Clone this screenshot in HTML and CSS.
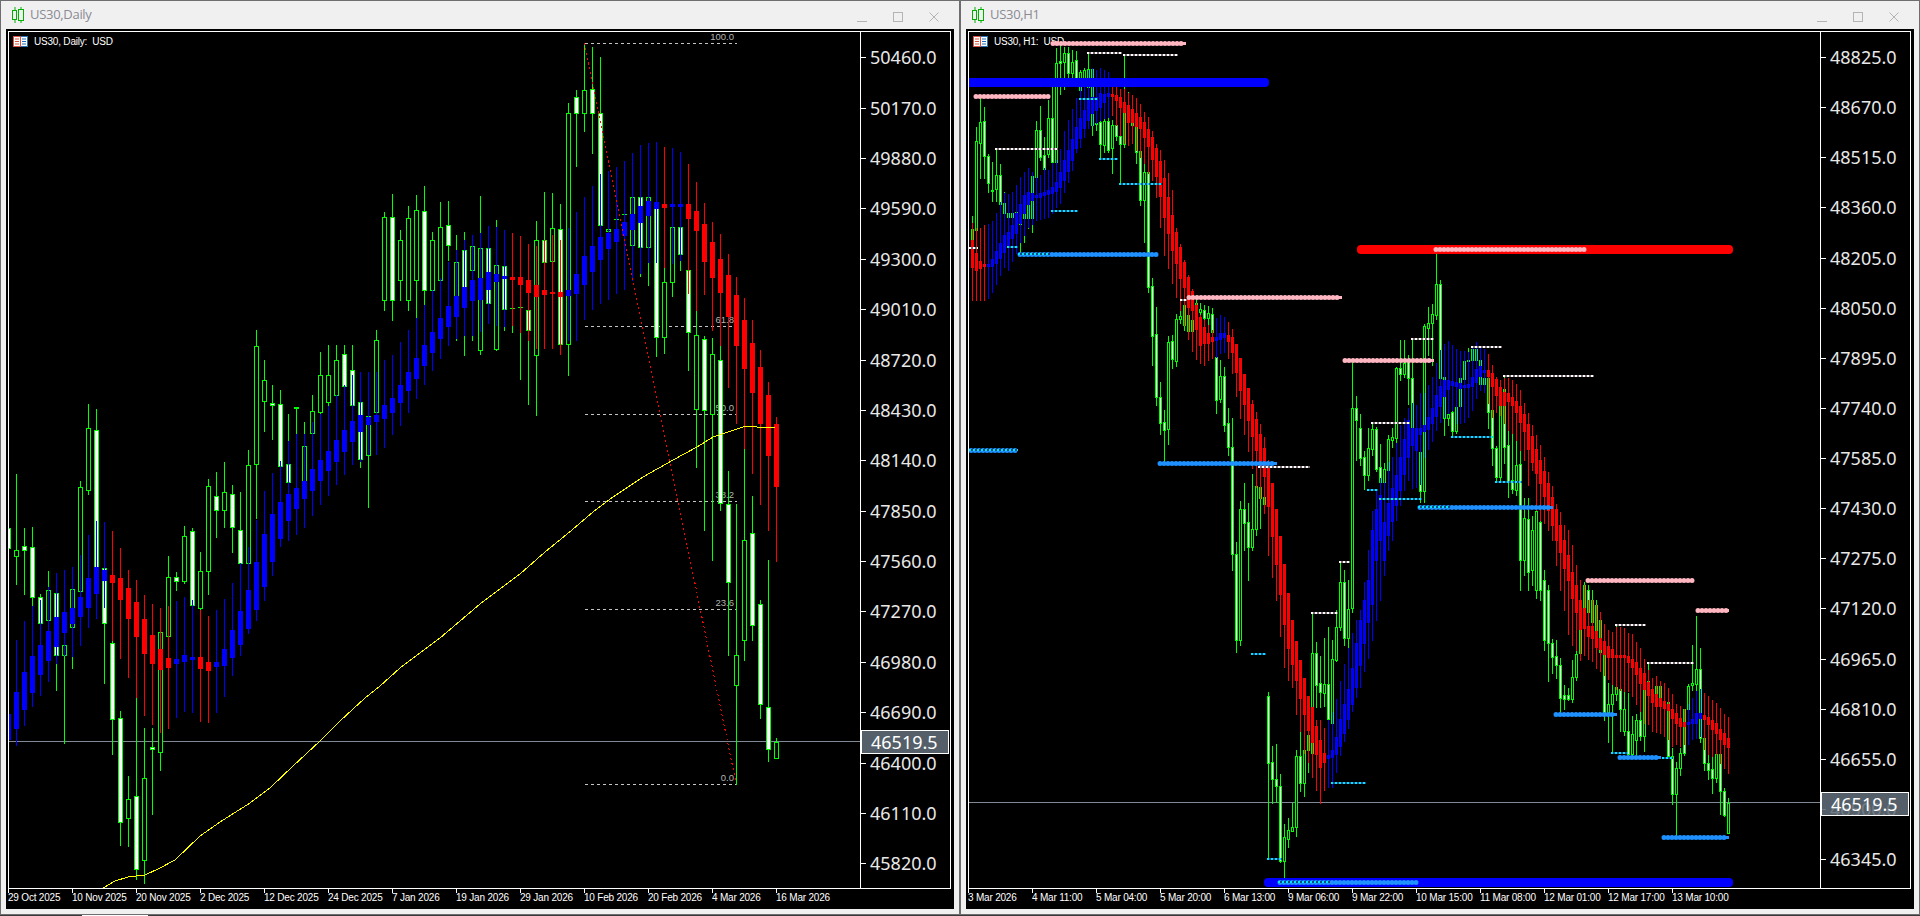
FILE: index.html
```html
<!DOCTYPE html>
<html lang="en">
<head>
<meta charset="utf-8">
<title>US30 charts</title>
<link rel="stylesheet" href="styles.css">
</head>
<body>
<main class="desktop">
  <section class="window">
    <header class="titlebar">
      <svg class="app-icon" viewBox="0 0 12 16"><path d="M3 0v3M3 13v3M9 0v3M9 13v3" stroke="#00b000" fill="none"/><rect x=".5" y="3.5" width="4" height="9" fill="none" stroke="#00b000"/><rect x="6.5" y="2.5" width="5" height="11" fill="none" stroke="#00b000"/></svg>
      <span class="title">US30,Daily</span>
      <div class="controls">
        <svg viewBox="0 0 10 10"><path d="M0 9.5h10" stroke="#b4b4b4"/></svg>
        <svg viewBox="0 0 10 10"><rect x=".5" y=".5" width="9" height="9" fill="none" stroke="#b4b4b4"/></svg>
        <svg viewBox="0 0 10 10"><path d="M.5.5l9 9M9.5.5l-9 9" stroke="#b4b4b4" fill="none"/></svg>
      </div>
    </header>
    <div class="frame">
      <div class="chart">
        <div class="plot">
          <div class="legend">
            <svg class="legend-icon" viewBox="0 0 15 11"><rect x=".5" y=".5" width="14" height="10" fill="#fff" stroke="#2a6fb0"/><path d="M.5.5H7.5V10.5H.5Z" fill="none" stroke="#e0503f"/><path d="M2 3h4M2 5.5h4M2 8h4" stroke="#e0503f"/><path d="M9 3h4M9 5.5h4M9 8h4" stroke="#1c6cb4"/></svg>
            <span>US30, Daily:&nbsp; USD</span>
          </div>
          <svg class="canvas" id="daily" viewBox="9 32 851 856"></svg>
        </div>
        <div class="price-axis daily-scale">
          <span class="tick">50460.0</span><span class="tick">50170.0</span><span class="tick">49880.0</span><span class="tick">49590.0</span><span class="tick">49300.0</span><span class="tick">49010.0</span><span class="tick">48720.0</span><span class="tick">48430.0</span><span class="tick">48140.0</span><span class="tick">47850.0</span><span class="tick">47560.0</span><span class="tick">47270.0</span><span class="tick">46980.0</span><span class="tick">46690.0</span><span class="tick">46400.0</span><span class="tick">46110.0</span><span class="tick">45820.0</span>
          <span class="price-tag">46519.5</span>
        </div>
      </div>
      <div class="time-axis">
        <span>29 Oct 2025</span><span>10 Nov 2025</span><span>20 Nov 2025</span><span>2 Dec 2025</span><span>12 Dec 2025</span><span>24 Dec 2025</span><span>7 Jan 2026</span><span>19 Jan 2026</span><span>29 Jan 2026</span><span>10 Feb 2026</span><span>20 Feb 2026</span><span>4 Mar 2026</span><span>16 Mar 2026</span>
      </div>
    </div>
  </section>

  <section class="window">
    <header class="titlebar">
      <svg class="app-icon" viewBox="0 0 12 16"><path d="M3 0v3M3 13v3M9 0v3M9 13v3" stroke="#00b000" fill="none"/><rect x=".5" y="3.5" width="4" height="9" fill="none" stroke="#00b000"/><rect x="6.5" y="2.5" width="5" height="11" fill="none" stroke="#00b000"/></svg>
      <span class="title">US30,H1</span>
      <div class="controls">
        <svg viewBox="0 0 10 10"><path d="M0 9.5h10" stroke="#b4b4b4"/></svg>
        <svg viewBox="0 0 10 10"><rect x=".5" y=".5" width="9" height="9" fill="none" stroke="#b4b4b4"/></svg>
        <svg viewBox="0 0 10 10"><path d="M.5.5l9 9M9.5.5l-9 9" stroke="#b4b4b4" fill="none"/></svg>
      </div>
    </header>
    <div class="frame">
      <div class="chart">
        <div class="plot">
          <div class="legend">
            <svg class="legend-icon" viewBox="0 0 15 11"><rect x=".5" y=".5" width="14" height="10" fill="#fff" stroke="#2a6fb0"/><path d="M.5.5H7.5V10.5H.5Z" fill="none" stroke="#e0503f"/><path d="M2 3h4M2 5.5h4M2 8h4" stroke="#e0503f"/><path d="M9 3h4M9 5.5h4M9 8h4" stroke="#1c6cb4"/></svg>
            <span>US30, H1:&nbsp; USD</span>
          </div>
          <svg class="canvas" id="hourly" viewBox="969 32 851 856"></svg>
        </div>
        <div class="price-axis hourly-scale">
          <span class="tick">48825.0</span><span class="tick">48670.0</span><span class="tick">48515.0</span><span class="tick">48360.0</span><span class="tick">48205.0</span><span class="tick">48050.0</span><span class="tick">47895.0</span><span class="tick">47740.0</span><span class="tick">47585.0</span><span class="tick">47430.0</span><span class="tick">47275.0</span><span class="tick">47120.0</span><span class="tick">46965.0</span><span class="tick">46810.0</span><span class="tick">46655.0</span><span class="tick">46500.0</span><span class="tick">46345.0</span>
          <span class="price-tag">46519.5</span>
        </div>
      </div>
      <div class="time-axis">
        <span>3 Mar 2026</span><span>4 Mar 11:00</span><span>5 Mar 04:00</span><span>5 Mar 20:00</span><span>6 Mar 13:00</span><span>9 Mar 06:00</span><span>9 Mar 22:00</span><span>10 Mar 15:00</span><span>11 Mar 08:00</span><span>12 Mar 01:00</span><span>12 Mar 17:00</span><span>13 Mar 10:00</span>
      </div>
    </div>
  </section>
</main>
<div class="taskstrip"><span class="task"></span></div>
<script src="chart.js"></script>
</body>
</html>
```
FILE: styles.css
```css
* { box-sizing: border-box; }
html, body { margin: 0; height: 100%; overflow: hidden; background: #3a3a3a; }
body { display: flex; flex-direction: column; font-family: "Liberation Sans", Arial, sans-serif; }

.desktop { display: grid; grid-template-columns: 960px 960px; height: 915px; }
.taskstrip { height: 1px; background: #3a3a3a; }
.task { display: block; width: 66px; height: 1px; margin-left: 82px; background: #fff; }

.window { display: flex; flex-direction: column; border: 1px solid #6e6e6e; background: #f0f0f0; }

.titlebar { flex: none; display: flex; align-items: center; height: 28px; padding: 0 20px 0 11px; }
.app-icon { width: 12px; height: 16px; margin-right: 6px; }
.title { margin-top: -2px; font-family: "Open Sans", sans-serif; font-size: 13px; letter-spacing: -0.3px; color: #8a8a94; }
.controls { display: flex; gap: 26px; margin-left: auto; margin-top: 4px; }
.controls svg { width: 10px; height: 10px; display: block; }

.frame { flex: none; height: 880px; margin: 0 5px; padding: 2px 3px 0 2px; background: #000; }

.chart { display: flex; height: 858px; border: 1px solid #fff; }
.plot { position: relative; flex: none; width: 851px; height: 856px; }
.canvas { position: relative; display: block; width: 851px; height: 856px; shape-rendering: crispEdges; }
.canvas text { font-family: "Liberation Sans", sans-serif; font-size: 9.5px; fill: #b4b4b4; text-anchor: end; shape-rendering: auto; }

.legend { position: absolute; left: 4px; top: 4px; display: flex; align-items: center; gap: 6px; color: #fff; font-size: 10px; letter-spacing: -0.2px; }
.legend-icon { width: 15px; height: 11px; display: block; }

.price-axis { position: relative; flex: none; width: 90px; display: flex; flex-direction: column; border-left: 1px solid #fff; }
.tick { position: relative; flex: none; display: flex; align-items: center; padding-left: 9px; color: #e8e8e8; font-family: "Noto Sans", sans-serif; font-size: 18px; }
.tick::before { content: ""; position: absolute; left: 0; top: 50%; width: 5px; height: 1px; background: #fff; }
.daily-scale .tick { height: 50.4px; }
.hourly-scale .tick { height: 50.125px; }

.price-tag { position: absolute; left: 0; width: 88px; height: 24px; display: flex; align-items: center; padding-left: 9px; border: 1px solid #fff; background: rgba(96, 108, 120, .88); color: #fff; font-family: "Noto Sans", sans-serif; font-size: 18px; }
.daily-scale .price-tag { top: 698px; }
.hourly-scale .price-tag { top: 760px; }

.time-axis { display: flex; height: 20px; }
.time-axis span { position: relative; flex: none; width: 64px; padding-top: 3px; color: #fff; font-size: 10px; letter-spacing: -0.2px; line-height: 12px; white-space: nowrap; }
.time-axis span::before { content: ""; position: absolute; left: 0; top: 0; width: 1px; height: 4px; background: #fff; }
```
FILE: chart.js
```js
var NS = "http://www.w3.org/2000/svg";
function el(parent, tag, attrs, text) {
  var n = document.createElementNS(NS, tag);
  for (var k in attrs) n.setAttribute(k, attrs[k]);
  if (text) n.textContent = text;
  parent.appendChild(n);
  return n;
}
function rect(p, x, y, w, h, fill) { if (h > 0) el(p, "rect", { x: x, y: y, width: w, height: h, fill: fill }); }

var GREEN = "#00ff00", BLUE = "#0000ff", RED = "#ff0000";

function candle(p, cx, half, c) {
  rect(p, cx, c[2], 1, c[3] - c[2] + 1, GREEN);
  var w = half * 2 + 1;
  rect(p, cx - half, c[0], w, c[1] - c[0] + 1, GREEN);
  rect(p, cx - half + 1, c[0] + 1, w - 2, c[1] - c[0] - 1, c[4] ? "#fff" : "#000");
}
function smooth(p, cx, half, c, color) {
  rect(p, cx, c[2], 1, c[3] - c[2] + 1, color);
  rect(p, cx - half, c[0], half * 2 + 1, c[1] - c[0] + 1, color);
}
function inRanges(i, ranges) {
  return ranges.some(function (r) { return i >= r[0] && i <= r[1]; });
}

/* ---------- Daily: bars k = -1..95, x = 16 + 8k ---------- */
var dailyBars = [
[528,548,520,560,1],[550,556,474,584,0],[546,550,528,594,1],[547,597,527,606,1],[597,623,594,640,1],[590,620,571,640,0],[593,655,585,690,1],[645,655,610,743,0],[589,627,580,668,0],[487,591,481,595,0],
[428,490,404,494,0],[430,567,409,570,1],[568,623,563,683,1],[643,719,638,754,1],[718,822,711,845,1],[799,818,776,846,0],[796,869,697,879,1],[778,860,728,883,0],[747,749,728,814,1],[632,752,625,770,0],
[577,636,556,640,0],[577,581,572,590,1],[536,581,526,583,0],[531,605,528,610,1],[571,608,552,611,0],[486,571,479,594,0],[496,510,472,537,1],[492,510,462,527,0],[494,527,485,552,1],[530,563,492,570,1],
[465,563,450,570,0],[346,464,330,518,0],[380,401,360,431,0],[403,405,385,439,1],[404,466,390,472,1],[464,482,414,500,1],[407,408,407,441,0],[446,481,422,492,0],[411,433,395,490,0],[375,412,352,440,0],
[375,402,345,420,0],[360,395,345,420,0],[354,386,345,410,1],[370,405,345,415,1],[402,459,390,467,1],[416,455,400,507,0],[340,412,330,425,0],[217,300,212,310,0],[217,300,194,320,1],[240,280,230,300,0],
[218,300,206,310,0],[210,280,195,320,0],[211,290,186,340,1],[240,290,232,325,0],[227,280,202,345,0],[225,245,201,260,1],[262,300,235,340,0],[250,290,232,355,1],[246,270,236,340,0],[248,350,196,354,0],
[248,303,235,312,1],[265,349,220,350,0],[266,309,240,330,1],[308,308,286,332,0],[307,307,290,379,0],[310,330,306,404,1],[240,355,221,415,0],[240,262,192,270,1],[228,261,193,270,0],[229,344,204,348,1],
[113,344,103,375,0],[97,113,90,166,1],[90,113,43,131,0],[89,113,47,153,1],[113,225,57,228,1],[229,231,226,250,0],[219,219,215,230,0],[214,214,210,225,0],[197,245,195,276,0],[197,247,195,276,1],
[197,247,197,285,0],[203,337,200,356,1],[282,337,267,353,0],[227,282,225,296,0],[227,254,225,270,1],[270,332,260,370,1],[335,409,301,467,0],[339,410,336,530,1],[354,414,338,560,0],[360,503,340,510,1],
[504,582,471,655,1],[655,685,504,784,0],[540,640,448,660,0],[533,625,496,640,1],[604,704,600,718,1],[707,749,560,761,1],[742,758,738,758,0]
];
var dailySmooth = [
[714,739,714,739],[692,728,640,745],[672,709,621,725],[656,692,606,706],[645,674,600,695],[631,660,587,681],[617,646,573,663],[612,632,570,655],[608,623,567,656],[597,616,555,645],
[578,607,535,627],[567,593,521,618],[570,580,522,607],[575,582,531,640],[578,599,548,658],[588,618,570,677],[602,636,580,697],[619,653,595,715],[635,663,604,724],[649,669,608,732],
[658,667,606,728],[659,663,601,717],[655,661,597,711],[657,659,600,712],[657,668,610,721],[662,670,616,722],[662,666,610,712],[649,665,599,696],[630,657,583,675],[611,644,563,655],
[590,628,547,633],[562,609,520,620],[534,586,491,600],[514,561,473,575],[502,538,461,546],[494,520,441,540],[488,508,434,534],[481,498,434,527],[469,490,422,515],[460,480,414,504],
[451,470,406,495],[440,461,395,484],[430,451,385,474],[421,441,375,464],[415,431,372,461],[417,424,372,454],[415,421,372,454],[405,418,360,447],[398,412,355,434],[385,402,342,425],
[372,390,330,412],[358,378,318,398],[345,365,305,384],[332,352,290,370],[318,338,278,358],[306,326,262,345],[296,316,250,338],[287,307,240,335],[280,300,235,335],[278,299,233,331],
[272,289,226,323],[274,281,227,325],[276,278,230,326],[277,279,233,325],[277,284,236,332],[280,292,244,340],[285,296,246,348],[290,294,240,348],[292,293,235,348],[292,296,240,354],
[290,295,228,340],[274,293,212,340],[256,284,197,319],[246,271,186,309],[237,259,174,303],[233,248,171,299],[229,241,167,293],[222,235,161,289],[214,229,153,280],[206,222,145,273],
[201,215,143,262],[202,208,142,262],[204,207,147,267],[204,206,148,263],[204,206,152,260],[204,218,164,293],[211,230,182,310],[224,261,203,294],[242,277,222,330],[259,292,234,345],
[275,316,254,387],[295,345,277,423],[320,368,298,448],[343,392,320,473],[367,423,350,504],[395,455,382,530],[424,486,417,561]
];

var daily = document.getElementById("daily");
[[43,"100.0"],[326,"61.8"],[414,"50.0"],[501,"38.2"],[609,"23.6"],[784,"0.0"]].forEach(function (f) {
  el(daily, "line", { x1: 585, x2: 737, y1: f[0] + .5, y2: f[0] + .5, stroke: "#c4c4c4", "stroke-dasharray": "3 3" });
  el(daily, "text", { x: 734, y: f[0] - 3 }, f[1]);
});
rect(daily, 9, 741, 851, 1, "#7f8a96");
dailyBars.forEach(function (c, i) { candle(daily, 8 + 8 * i, 2, c); });
dailySmooth.forEach(function (c, i) {
  var isRed = inRanges(i, [[13,20],[24,25],[63,69],[82,82],[85,96]]);
  smooth(daily, 8 + 8 * i, 2, c, isRed ? RED : BLUE);
});
el(daily, "polyline", { fill: "none", stroke: "#ffff00", points: "103,888 115,881 128,877 145,875 160,868 175,860 200,836 220,822 250,803 270,788 293,766 320,741 340,721 365,698 380,686 400,668 440,638 480,604 520,574 545,552 572,530 593,512 613,497 643,477 673,460 697,447 713,437 743,427 750,426 757,427 775,428" });
el(daily, "line", { x1: 584, y1: 43, x2: 736, y2: 783, stroke: "#ff0000", "stroke-dasharray": "2 3" });

/* ---------- H1: bars i = 0..189, x = 972 + 4i ---------- */
var hourlyBars = [
[229,240,216,252,0],[141,230,127,232,0],[122,143,97,178,0],[121,156,107,178,1],[156,183,154,192,1],[190,191,162,201,0],[175,189,148,201,0],[175,204,164,215,1],[203,213,192,225,0],[213,217,205,228,0],
[213,217,205,225,0],[212,217,205,228,0],[220,224,212,252,0],[205,218,200,242,0],[205,218,168,228,0],[176,218,172,232,0],[130,177,121,181,0],[130,157,106,160,1],[155,169,137,171,1],[118,154,100,157,0],
[118,162,87,165,1],[63,162,48,165,0],[61,63,43,94,1],[53,62,47,89,0],[53,73,47,80,1],[62,73,50,80,0],[60,78,51,85,1],[72,90,70,93,0],[70,85,68,93,0],[69,87,52,93,0],
[69,125,68,135,0],[123,124,100,130,0],[122,144,118,158,1],[121,145,119,152,0],[121,150,118,152,1],[125,148,120,173,0],[125,136,122,140,1],[136,144,133,183,1],[112,144,55,147,0],[112,122,92,128,0],
[112,125,95,130,0],[126,152,122,163,1],[151,200,148,205,1],[172,200,162,242,0],[172,287,170,292,1],[286,336,278,365,1],[334,397,307,405,1],[397,423,382,434,1],[422,430,410,463,1],[342,429,336,444,0],
[341,359,335,368,1],[319,361,314,366,0],[316,319,310,323,0],[305,325,300,330,0],[315,331,305,335,0],[320,331,308,335,0],[303,320,295,330,0],[309,312,303,320,0],[310,318,305,325,1],[313,318,306,325,0],
[314,332,308,335,1],[357,400,328,413,1],[376,399,360,402,0],[376,425,367,431,1],[423,447,408,455,1],[447,554,418,570,1],[554,640,542,652,1],[509,640,501,645,0],[509,523,483,550,1],[522,547,503,580,1],
[529,547,474,550,0],[486,529,480,535,0],[487,498,485,528,0],[497,504,490,513,0],[696,763,692,858,1],[762,779,746,803,1],[779,786,744,802,1],[786,861,774,862,1],[837,861,824,878,0],[830,839,818,847,0],
[827,831,803,831,0],[756,827,750,836,0],[756,783,731,791,1],[750,783,746,796,0],[735,750,729,772,0],[653,753,612,760,0],[653,685,642,707,1],[683,692,656,707,1],[684,693,638,706,0],[684,719,627,732,1],
[659,723,640,726,0],[627,660,610,661,0],[582,627,561,630,0],[582,638,570,645,1],[609,638,580,655,0],[408,608,363,612,0],[408,420,396,460,1],[428,458,414,465,1],[457,475,451,489,1],[448,475,428,480,0],
[429,449,422,455,0],[429,469,427,471,1],[467,482,444,495,1],[469,482,463,490,0],[439,470,435,475,0],[437,440,428,447,0],[368,438,367,443,0],[368,374,340,380,1],[363,374,340,377,0],[361,378,355,404,1],
[378,427,338,432,1],[437,440,437,487,0],[452,491,396,502,1],[326,491,324,502,0],[323,328,307,355,0],[314,323,304,365,0],[284,315,254,319,0],[284,378,280,383,1],[377,418,372,435,0],[414,418,400,425,0],
[412,431,405,436,1],[407,431,400,433,0],[378,406,372,412,0],[361,379,355,385,0],[360,361,348,365,0],[349,360,347,366,0],[349,360,347,366,0],[360,384,356,390,0],[378,384,372,390,0],[378,412,372,428,1],
[410,448,407,465,1],[448,477,446,482,1],[398,477,390,481,0],[389,447,375,463,1],[445,481,422,497,1],[480,489,429,493,1],[465,490,440,495,0],[464,560,440,590,1],[518,560,498,575,0],[519,572,498,590,1],
[530,570,516,585,0],[511,590,505,598,0],[522,590,510,600,1],[580,640,570,650,1],[590,643,585,681,1],[643,657,639,673,1],[656,665,640,678,1],[665,698,658,713,1],[695,699,685,709,1],[695,699,688,700,1],
[677,699,660,702,0],[654,677,649,680,0],[610,653,605,655,0],[585,614,582,625,0],[590,612,585,620,1],[600,622,590,640,0],[605,640,600,650,1],[620,652,616,660,1],[651,712,624,720,1],[704,712,683,742,0],
[694,704,683,753,0],[687,694,624,700,0],[689,709,684,731,1],[709,731,679,735,0],[731,754,693,755,1],[734,754,716,758,0],[720,740,714,756,0],[720,736,699,740,1],[689,736,681,751,0],[681,695,662,705,1],
[689,701,685,705,1],[686,706,684,710,0],[686,706,684,710,0],[701,705,699,708,0],[702,756,700,758,1],[756,794,748,804,1],[768,794,762,836,0],[753,768,748,775,0],[709,753,709,755,1],[686,709,684,715,0],
[683,685,645,690,0],[669,684,616,690,0],[669,738,648,742,1],[738,763,730,770,1],[763,770,754,779,1],[769,778,754,793,1],[754,778,740,782,0],[754,791,752,814,1],[791,815,788,816,1],[803,833,798,833,0]
];
var hourlySmooth = [
[240,267,223,300],[253,270,228,300],[261,268,228,300],[264,266,225,300],[264,266,224,298],[259,266,221,292],[251,263,213,284],[243,258,202,275],[235,252,193,267],[232,245,194,270],
[225,238,192,261],[213,233,185,253],[204,223,177,242],[195,213,172,235],[192,204,168,227],[193,200,172,224],[195,197,177,220],[193,197,175,219],[192,195,168,218],[190,194,170,217],
[187,193,163,213],[182,191,160,207],[172,187,149,203],[160,180,131,192],[150,171,120,182],[139,160,109,170],[127,148,98,152],[118,138,87,147],[110,128,80,137],[100,120,70,128],
[97,113,68,125],[97,110,70,123],[93,107,68,120],[94,102,70,118],[93,96,72,117],[94,96,85,115],[95,100,87,125],[97,107,89,135],[102,112,89,143],[105,122,93,145],
[109,122,95,143],[113,126,98,150],[117,128,104,157],[122,137,112,163],[129,146,117,173],[137,159,131,180],[148,176,144,197],[161,196,150,227],[178,217,160,255],[197,233,173,268],
[215,250,190,283],[232,263,228,297],[247,278,244,310],[262,287,260,325],[277,307,275,339],[291,310,289,351],[305,329,303,359],[317,345,315,363],[327,343,320,365],[333,343,325,360],
[337,341,330,358],[337,340,318,357],[333,339,315,353],[333,337,317,352],[335,341,322,358],[337,352,329,373],[344,372,344,396],[358,390,358,418],[374,404,374,434],[388,420,388,451],
[404,436,400,468],[419,450,412,487],[434,465,424,498],[448,476,437,513],[466,506,460,555],[483,536,483,577],[509,564,509,600],[536,594,536,636],[564,624,564,667],[593,648,593,680],
[620,664,620,687],[641,680,641,714],[660,698,660,731],[678,714,678,753],[696,730,696,762],[707,742,707,777],[726,754,720,790],[740,767,720,803],[753,762,728,790],[755,758,720,787],
[750,757,712,787],[737,754,699,772],[719,746,681,755],[704,733,664,741],[689,719,648,728],[668,704,633,711],[643,687,620,697],[620,665,610,687],[600,643,582,671],[580,622,550,658],
[530,604,511,640],[509,560,490,620],[495,540,478,600],[522,560,482,575],[503,535,462,550],[488,521,457,540],[475,505,443,520],[457,490,425,505],[439,474,418,490],[420,457,408,480],
[428,445,403,488],[428,450,405,487],[428,434,393,484],[425,431,393,457],[417,429,385,449],[408,423,377,441],[395,416,363,430],[386,406,350,422],[380,396,344,417],[380,389,341,413],
[381,385,345,410],[382,386,349,423],[383,388,351,423],[385,387,351,422],[384,387,352,417],[377,386,348,410],[369,382,342,398],[366,376,347,390],[370,372,349,392],[370,376,354,403],
[373,386,365,417],[379,395,377,412],[387,405,380,415],[392,405,378,423],[393,401,378,430],[397,405,380,433],[401,412,384,440],[406,422,390,450],[414,431,403,460],[424,449,413,485],
[436,462,425,470],[449,473,435,510],[460,483,445,520],[471,496,457,523],[483,510,472,530],[497,525,486,540],[509,540,504,565],[525,552,512,590],[540,568,525,610],[555,580,530,634],
[572,598,545,645],[585,612,565,650],[600,629,580,660],[608,628,585,655],[626,636,600,659],[626,638,600,661],[631,647,605,668],[638,649,612,671],[641,654,624,675],[646,657,630,679],
[649,657,632,684],[655,657,627,689],[655,657,627,690],[655,657,628,691],[656,662,633,691],[659,667,634,696],[662,674,642,704],[668,683,648,711],[673,689,659,723],[682,695,670,724],
[689,702,678,731],[694,706,676,732],[698,706,681,733],[701,708,683,736],[704,710,688,739],[709,718,694,746],[713,723,704,744],[718,726,706,746],[722,726,709,744],[722,724,704,744],
[719,723,698,739],[713,723,691,738],[713,718,689,736],[715,719,693,749],[717,724,696,754],[720,729,700,756],[723,733,703,754],[729,739,708,763],[733,744,714,768],[738,747,717,773]
];

var hourly = document.getElementById("hourly");
rect(hourly, 969, 802, 851, 1, "#7f8a96");
hourlyBars.forEach(function (c, i) { candle(hourly, 972 + 4 * i, 1, c); });
hourlySmooth.forEach(function (c, i) {
  var isRed = inRanges(i, [[0,3],[35,60],[64,88],[129,178],[183,189]]);
  smooth(hourly, 972 + 4 * i, 1, c, isRed ? RED : BLUE);
});

function bigBar(x1, x2, y, color) { el(hourly, "rect", { x: x1, y: y, width: x2 - x1, height: 9, rx: 4, fill: color, "shape-rendering": "auto" }); }
bigBar(960, 1269, 78, BLUE);
bigBar(1357, 1733, 245, RED);
bigBar(1264, 1733, 878, BLUE);

function beads(list, color) {
  list.forEach(function (d) {
    el(hourly, "line", { x1: d[0] + 2, x2: d[1] - 2, y1: d[2] + .5, y2: d[2] + .5, stroke: color, "stroke-width": 5, "stroke-linecap": "round", "stroke-dasharray": "0 4", "shape-rendering": "auto" });
    el(hourly, "rect", { x: d[0] + 1, y: d[2] - 1, width: d[1] - d[0] - 2, height: 3, fill: color });
  });
}
function dots(list, base, top) {
  list.forEach(function (d) {
    rect(hourly, d[0], d[2], d[1] - d[0], 2, base);
    el(hourly, "line", { x1: d[0], x2: d[1], y1: d[2] + 1, y2: d[2] + 1, stroke: top, "stroke-width": 2, "stroke-dasharray": "2 2" });
  });
}
beads([[1051,1187,43],[974,1051,96],[1187,1343,297],[1343,1435,360],[1434,1587,249],[1586,1695,580],[1696,1730,610]], "#ffb6c1");
beads([[1018,1159,254],[969,1018,450],[1158,1278,463],[1418,1554,507],[1554,1618,714],[1618,1662,757],[1662,1730,837],[1278,1419,882]], "#1e90ff");
dots([[1087,1122,52],[1123,1178,54],[995,1058,148],[969,978,247],[1180,1187,299],[1411,1434,338],[1371,1410,422],[1471,1502,346],[1503,1594,375],[1258,1310,466],[1339,1350,561],[1311,1338,612],[1615,1646,624],[1647,1694,662]], "#7a6a70", "#ffffff");
dots([[1079,1098,98],[1099,1118,158],[1119,1162,183],[1051,1078,210],[1007,1018,246],[1451,1493,436],[1495,1522,481],[1367,1378,489],[1379,1422,498],[1331,1366,782],[1251,1266,653],[1267,1282,858],[1611,1628,752],[1662,1673,757],[1018,1050,253],[969,1018,449],[1278,1330,881],[1418,1450,506]], "#0a4a80", "#00e5ff");
```
